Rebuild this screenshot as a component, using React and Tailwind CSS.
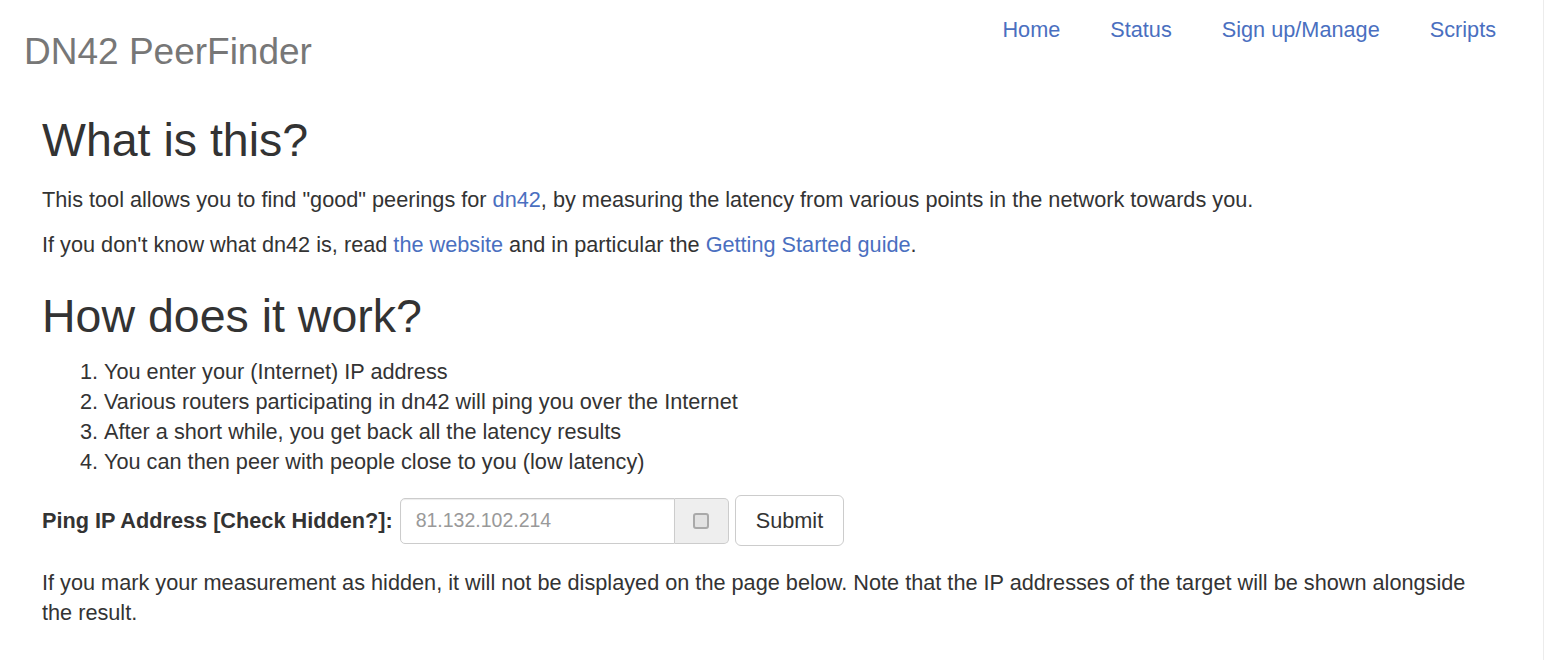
import React from 'react';

// Top navigation entries
const NAV = ['Home', 'Status', 'Sign up/Manage', 'Scripts'];

const STEPS = [
  'You enter your (Internet) IP address',
  'Various routers participating in dn42 will ping you over the Internet',
  'After a short while, you get back all the latency results',
  'You can then peer with people close to you (low latency)'
];

const A = ({ children }) => (
  <a href="#" className="text-[#4a6fc0] no-underline">{children}</a>
);

export default function App() {
  return (
    <div
      className="min-h-screen bg-white text-[#333] border-r border-[#ececec]"
      style={{ fontFamily: '"Liberation Sans", Arial, sans-serif' }}
    >
      {/* Navbar */}
      <header className="flex justify-between items-start h-[100px]">
        <div className="pl-[24px] pt-[33px] text-[37px] leading-none text-[#777]">
          DN42 PeerFinder
        </div>
        <nav className="flex gap-[50px] pr-[47px] pt-[15px] text-[21.7px] leading-[30px]">
          {NAV.map((item) => (
            <A key={item}>{item}</A>
          ))}
        </nav>
      </header>

      <main className="pl-[42px] pr-[50px] text-[21.7px] leading-[30px]">
        <h2 className="mt-[15px] mb-[19px] text-[46.5px] leading-[1.1] font-normal">What is this?</h2>
        <p className="mb-[15px]">
          This tool allows you to find "good" peerings for <A>dn42</A>, by measuring the latency from various points in the network towards you.
        </p>
        <p>
          If you don't know what dn42 is, read <A>the website</A> and in particular the <A>Getting Started guide</A>.
        </p>

        <h2 className="mt-[31px] mb-[15px] text-[46.5px] leading-[1.1] font-normal">How does it work?</h2>
        <ol className="list-decimal pl-[62px]">
          {STEPS.map((s) => (
            <li key={s}>{s}</li>
          ))}
        </ol>

        <form className="flex items-center mt-[18px]" onSubmit={(e) => e.preventDefault()}>
          <label className="font-bold mr-[7px]">Ping IP Address [Check Hidden?]:</label>
          <div className="flex h-[46px] w-[329px]">
            <input
              type="text"
              placeholder="81.132.102.214"
              className="flex-1 min-w-0 h-full px-[15px] border border-[#ccc] rounded-l-[5px] text-[19.5px] placeholder:text-[#999] outline-none shadow-[inset_0_1px_1px_rgba(0,0,0,0.075)]"
            />
            <span className="w-[54px] h-full flex items-center justify-center bg-[#eee] border border-l-0 border-[#ccc] rounded-r-[5px]">
              <span className="block w-[16px] h-[16px] rounded-[3px] border-2 border-[#a9a9a9] bg-[#e2e2e2]" />
            </span>
          </div>
          <button
            type="submit"
            className="ml-[6px] h-[51px] px-[20px] bg-white border border-[#ccc] rounded-[6px] text-[21.7px] text-[#333]"
          >
            Submit
          </button>
        </form>

        <p className="mt-[22px]">
          If you mark your measurement as hidden, it will not be displayed on the page below. Note that the IP addresses of the target will be shown alongside the result.
        </p>
      </main>
    </div>
  );
}
